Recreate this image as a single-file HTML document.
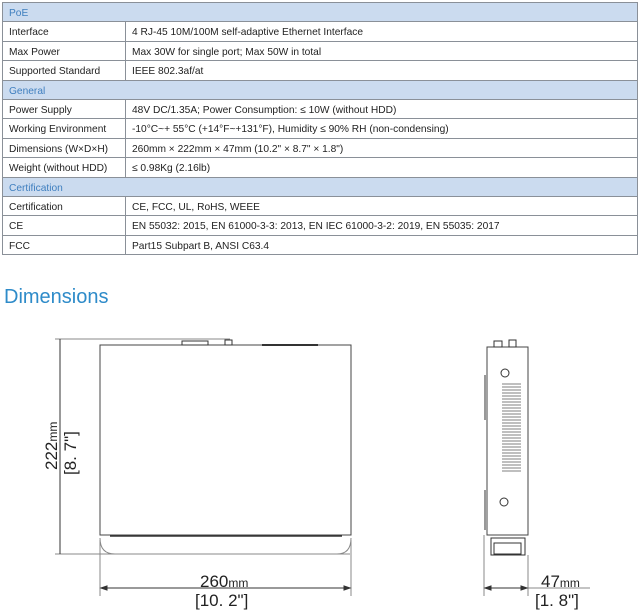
<!DOCTYPE html>
<html><head><meta charset="utf-8"><style>
body{margin:0;width:640px;height:610px;background:#fff;position:relative;overflow:hidden;font-family:"Liberation Sans",sans-serif}
table{position:absolute;left:2px;top:2px;width:636px;border-collapse:collapse;font-size:10.2px;color:#222}
td{border:1px solid #8a9098;height:15.4px;line-height:15.4px;padding:3px 0 0 6px;white-space:nowrap;vertical-align:middle}
td.l{width:116px}
tr.h td{background:#cbdbef;color:#3f7fbf}
h1{position:absolute;left:4px;top:286px;margin:0;font-weight:normal;font-size:20px;color:#2e8bc9}
</style></head><body>
<table>
<tr class="h"><td colspan="2">PoE</td></tr>
<tr><td class="l">Interface</td><td>4 RJ-45 10M/100M self-adaptive Ethernet Interface</td></tr>
<tr><td class="l">Max Power</td><td>Max 30W for single port; Max 50W in total</td></tr>
<tr><td class="l">Supported Standard</td><td>IEEE 802.3af/at</td></tr>
<tr class="h"><td colspan="2">General</td></tr>
<tr><td class="l">Power Supply</td><td>48V DC/1.35A; Power Consumption: ≤ 10W (without HDD)</td></tr>
<tr><td class="l">Working Environment</td><td>-10°C~+ 55°C (+14°F~+131°F), Humidity ≤ 90% RH (non-condensing)</td></tr>
<tr><td class="l">Dimensions (W×D×H)</td><td>260mm × 222mm × 47mm (10.2" × 8.7" × 1.8")</td></tr>
<tr><td class="l">Weight (without HDD)</td><td>≤ 0.98Kg (2.16lb)</td></tr>
<tr class="h"><td colspan="2">Certification</td></tr>
<tr><td class="l">Certification</td><td>CE, FCC, UL, RoHS, WEEE</td></tr>
<tr><td class="l">CE</td><td>EN 55032: 2015, EN 61000-3-3: 2013, EN IEC 61000-3-2: 2019, EN 55035: 2017</td></tr>
<tr><td class="l">FCC</td><td>Part15 Subpart B, ANSI C63.4</td></tr>
</table>
<h1>Dimensions</h1>
<svg width="640" height="610" style="position:absolute;left:0;top:0" fill="none" stroke="#333" stroke-width="1">
<line x1="55" y1="339" x2="230" y2="339" stroke="#888"/>
<line x1="55" y1="554" x2="350" y2="554" stroke="#888"/>
<line x1="60" y1="339" x2="60" y2="554"/>
<rect x="100" y="345" width="251" height="190" stroke="#444"/>
<rect x="182" y="341" width="26" height="4"/><rect x="225" y="340" width="7" height="5"/>
<line x1="262" y1="345" x2="318" y2="345" stroke-width="2"/>
<path d="M100 538 Q100 554 115 554 L337 554 Q351 554 351 538" stroke="#888"/>
<line x1="110" y1="536" x2="342" y2="536" stroke-width="1.5"/>
<line x1="100" y1="540" x2="100" y2="596" stroke="#888"/>
<line x1="351" y1="540" x2="351" y2="596" stroke="#888"/>
<line x1="101" y1="588" x2="350" y2="588"/>
<path d="M101 588 l6 -2 v4z M350 588 l-6 -2 v4z" fill="#333"/>
<rect x="487" y="347" width="41" height="188" stroke="#444"/>
<rect x="494" y="341" width="8" height="6"/><rect x="509" y="340" width="7" height="7"/>
<line x1="485" y1="375" x2="485" y2="420"/><line x1="485" y1="490" x2="485" y2="530"/>
<circle cx="505" cy="373" r="4"/><circle cx="504" cy="502" r="4"/>
<g stroke="#555" stroke-width="0.8">
<path d="M502 384h19M502 387h19M502 390h19M502 393h19M502 396h19M502 399h19M502 402h19M502 405h19M502 408h19M502 411h19M502 414h19M502 417h19M502 420h19M502 423h19M502 426h19M502 429h19M502 432h19M502 435h19M502 438h19M502 441h19M502 444h19M502 447h19M502 450h19M502 453h19M502 456h19M502 459h19M502 462h19M502 465h19M502 468h19M502 471h19"/>
</g>
<rect x="491" y="538" width="34" height="17"/><rect x="494" y="543" width="27" height="11"/>
<line x1="484" y1="535" x2="484" y2="596" stroke="#888"/>
<line x1="528" y1="555" x2="528" y2="596" stroke="#888"/>
<line x1="485" y1="588" x2="527" y2="588"/>
<line x1="528" y1="588" x2="590" y2="588" stroke="#888"/>
<path d="M485 588 l6 -2 v4z M527 588 l-6 -2 v4z" fill="#333"/>
<g fill="#222" stroke="none" font-family="Liberation Sans Narrow, Liberation Sans, sans-serif">
<text x="200" y="587" font-size="17">260<tspan font-size="12">mm</tspan></text>
<text x="195" y="606" font-size="17">[10. 2"]</text>
<text x="541" y="587" font-size="17">47<tspan font-size="12">mm</tspan></text>
<text x="535" y="606" font-size="17">[1. 8"]</text>
<text transform="translate(57,470) rotate(-90)" font-size="17">222<tspan font-size="12">mm</tspan></text>
<text transform="translate(76,475) rotate(-90)" font-size="17">[8. 7"]</text>
</g>
</svg>
</body></html>
